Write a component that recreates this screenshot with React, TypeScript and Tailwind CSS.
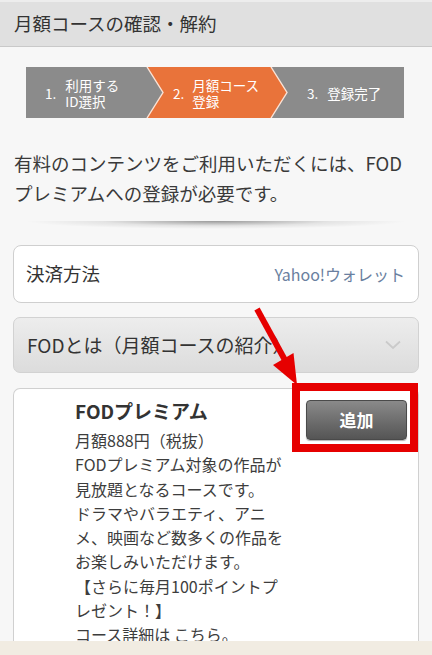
import React from "react";

const Steps = () => (
  <div className="relative mx-[26px] mt-[20px] h-[51px]">
    <svg className="absolute inset-0" width="378" height="51" viewBox="0 0 378 51">
      <rect x="0" y="0" width="378" height="51" fill="#8b8b8b" />
      <polygon points="121,0 245,0 261,25.5 245,51 121,51 137,25.5" fill="#e9733a" />
      <polyline points="121,0 137,25.5 121,51" fill="none" stroke="#fbe3d6" strokeWidth="1.4" />
      <polyline points="245,0 261,25.5 245,51" fill="none" stroke="#fbe3d6" strokeWidth="1.4" />
    </svg>
    <div className="relative flex h-full items-center text-white text-[13.5px] leading-[16px]">
      <div className="flex w-[128px] items-center gap-[9px] pl-[19px]">
        <span>1.</span>
        <div>
          <div>利用する</div>
          <div>ID選択</div>
        </div>
      </div>
      <div className="flex w-[134px] items-center gap-[8px] pl-[19px]">
        <span>2.</span>
        <div>
          <div>月額コース</div>
          <div>登録</div>
        </div>
      </div>
      <div className="flex items-center gap-[9px] pl-[19px]">
        <span>3.</span>
        <span>登録完了</span>
      </div>
    </div>
  </div>
);

export default function App() {
  const body = [
    "月額888円（税抜）",
    "FODプレミアム対象の作品が",
    "見放題となるコースです。",
    "ドラマやバラエティ、アニ",
    "メ、映画など数多くの作品を",
    "お楽しみいただけます。",
    "【さらに毎月100ポイントプ",
    "レゼント！】",
  ];
  return (
    <div className="relative flex h-[655px] w-[432px] flex-col overflow-hidden bg-[#f7f7f7] font-['Noto_Sans_CJK_JP','Noto_Sans',sans-serif] text-[#333]">
      {/* header */}
      <div className="flex h-[47px] shrink-0 items-center border-t-[2px] border-b border-t-[#ededed] border-b-[#c9c9c9] bg-[#e0e0e0] pl-[14px] text-[18.5px] text-[#333]">
        月額コースの確認・解約
      </div>

      <Steps />

      <p className="mt-[30px] px-[14px] text-[18.5px] leading-[30px] text-[#3a3a3a]">
        <span className="block whitespace-nowrap">有料のコンテンツをご利用いただくには、FOD</span>
        <span className="block whitespace-nowrap">プレミアムへの登録が必要です。</span>
      </p>

      <div className="mx-auto mt-[13px] h-[8px] w-[380px] shrink-0 bg-[radial-gradient(ellipse_50%_100%_at_50%_0%,rgba(0,0,0,0.38),rgba(0,0,0,0.08)_60%,transparent_100%)]" />

      {/* payment */}
      <div className="mx-[13px] mt-[16px] flex h-[58px] shrink-0 items-center justify-between rounded-[8px] border border-[#cfcfcf] bg-white pl-[12px] pr-[13px]">
        <span className="text-[18.5px] text-[#333]">決済方法</span>
        <span className="text-[16px] text-[#6a7fa0]">Yahoo!ウォレット</span>
      </div>

      {/* accordion */}
      <div className="mx-[13px] mt-[14px] flex h-[56px] shrink-0 items-center justify-between rounded-[7px] border border-[#d2d2d2] bg-gradient-to-b from-[#ededed] to-[#dcdcdc] pl-[13px] pr-[17px]">
        <span className="text-[19px] text-[#333]">FODとは（月額コースの紹介）</span>
        <svg width="16" height="10" viewBox="0 0 16 10">
          <polyline points="1,1.5 8,8 15,1.5" fill="none" stroke="#cacaca" strokeWidth="1.8" />
        </svg>
      </div>

      {/* product card */}
      <div className="mx-[13px] mt-[15px] flex min-h-0 flex-1 justify-between rounded-t-[7px] border border-b-0 border-[#d0d0d0] bg-white">
        <div className="pl-[61px] pt-[9px] text-[#3d3d3d]">
          <div className="mb-[4px] text-[19px] font-bold leading-[26px] text-[#333]">FODプレミアム</div>
          {body.map((l) => (
            <div key={l} className="whitespace-nowrap text-[16px] leading-[24.3px]">
              {l}
            </div>
          ))}
          <div className="whitespace-nowrap text-[16px] leading-[24.3px]">
            コース詳細は <span className="underline underline-offset-[3px]">こちら。</span>
          </div>
        </div>
        <div className="pr-[11px] pt-[11px]">
          <button className="flex h-[40px] w-[101px] items-center justify-center rounded-[4px] border border-[#4a4a4a] bg-gradient-to-b from-[#8a8a8a] to-[#555] text-[17px] font-bold text-white shadow-[0_1px_1px_rgba(0,0,0,0.3)]">
            追加
          </button>
        </div>
      </div>

      {/* footer strip */}
      <div className="h-[14px] shrink-0 bg-[#f1ece2]" />

      {/* annotations */}
      <div className="pointer-events-none absolute left-[292px] top-[383px] h-[69px] w-[126px] border-[8px] border-[#e60000]" />
      <svg className="pointer-events-none absolute left-0 top-0" width="432" height="655" viewBox="0 0 432 655">
        <line x1="257" y1="309" x2="286" y2="362" stroke="#e60000" strokeWidth="6" />
        <polygon points="297,385 293.5,353 273,365" fill="#e60000" />
      </svg>
    </div>
  );
}
